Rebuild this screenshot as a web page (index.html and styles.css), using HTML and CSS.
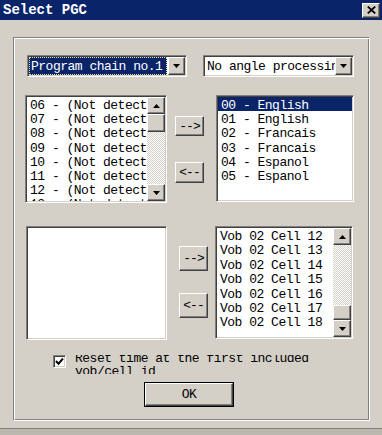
FILE: index.html
```html
<!DOCTYPE html>
<html>
<head>
<meta charset="utf-8">
<link rel="stylesheet" href="styles.css">
</head>
<body>
<div class="window">
  <div class="titlebar">
    <span class="title">Select PGC</span>
    <div class="close"><svg width="9" height="8" viewBox="0 0 9 8"><path d="M0.8 0.6 L8.2 7.4 M8.2 0.6 L0.8 7.4" stroke="#000" stroke-width="1.8" fill="none"/></svg></div>
  </div>
  <div class="group">
    <div class="row row-combos">
      <div class="combo combo1">
        <div class="combo-field"><span class="sel-text">Program chain no.1</span></div>
        <div class="raised drop-btn"><svg width="7" height="4" viewBox="0 0 7 4"><polygon points="0,0 7,0 3.5,4" fill="#000"/></svg></div>
      </div>
      <div class="combo combo2">
        <div class="combo-field plain">No angle processing</div>
        <div class="raised drop-btn"><svg width="7" height="4" viewBox="0 0 7 4"><polygon points="0,0 7,0 3.5,4" fill="#000"/></svg></div>
      </div>
    </div>

    <div class="row row-lists1">
      <div class="listbox list1">
        <div class="items">
          <div class="item">06 - (Not detected)</div>
          <div class="item">07 - (Not detected)</div>
          <div class="item">08 - (Not detected)</div>
          <div class="item">09 - (Not detected)</div>
          <div class="item">10 - (Not detected)</div>
          <div class="item">11 - (Not detected)</div>
          <div class="item">12 - (Not detected)</div>
          <div class="item">13 - (Not detected)</div>
        </div>
        <div class="vscroll">
          <div class="raised sb-btn"><svg width="7" height="4" viewBox="0 0 7 4"><polygon points="0,4 7,4 3.5,0" fill="#000"/></svg></div>
          <div class="raised thumb thumb-top"></div>
          <div class="track"></div>
          <div class="raised sb-btn"><svg width="7" height="4" viewBox="0 0 7 4"><polygon points="0,0 7,0 3.5,4" fill="#000"/></svg></div>
        </div>
      </div>
      <div class="btncol btncol1">
        <div class="raised pbtn pbtn-a">--&gt;</div>
        <div class="raised pbtn pbtn-b">&lt;--</div>
      </div>
      <div class="listbox list2">
        <div class="items">
          <div class="item selected">00 - English</div>
          <div class="item">01 - English</div>
          <div class="item">02 - Francais</div>
          <div class="item">03 - Francais</div>
          <div class="item">04 - Espanol</div>
          <div class="item">05 - Espanol</div>
        </div>
      </div>
    </div>

    <div class="row row-lists2">
      <div class="listbox list3"></div>
      <div class="btncol btncol2">
        <div class="raised pbtn pbtn-c">--&gt;</div>
        <div class="raised pbtn pbtn-d">&lt;--</div>
      </div>
      <div class="listbox list4">
        <div class="items">
          <div class="item">Vob 02 Cell 12</div>
          <div class="item">Vob 02 Cell 13</div>
          <div class="item">Vob 02 Cell 14</div>
          <div class="item">Vob 02 Cell 15</div>
          <div class="item">Vob 02 Cell 16</div>
          <div class="item">Vob 02 Cell 17</div>
          <div class="item">Vob 02 Cell 18</div>
        </div>
        <div class="vscroll">
          <div class="raised sb-btn"><svg width="7" height="4" viewBox="0 0 7 4"><polygon points="0,4 7,4 3.5,0" fill="#000"/></svg></div>
          <div class="track"></div>
          <div class="raised thumb thumb-bottom"></div>
          <div class="raised sb-btn"><svg width="7" height="4" viewBox="0 0 7 4"><polygon points="0,0 7,0 3.5,4" fill="#000"/></svg></div>
        </div>
      </div>
    </div>

    <div class="row checkrow">
      <div class="checkbox"><svg width="9" height="9" viewBox="0 0 9 9"><path d="M1 4 L3.5 6.8 L8 1.5" stroke="#000" stroke-width="2" fill="none"/></svg></div>
      <div class="check-label"><div class="check-text">Reset time at the first included<br>vob/cell id</div></div>
    </div>

    <div class="row okrow">
      <div class="okbtn"><div class="raised okinner">OK</div></div>
    </div>
  </div>
  <div class="frame-bottom"></div>
</div>
</body>
</html>
```
FILE: styles.css
```css
html, body {
  margin: 0;
  padding: 0;
}
body {
  background: #d4d0c8;
  font-family: "Liberation Mono", "DejaVu Sans Mono", monospace;
  font-size: 13px;
  letter-spacing: -0.5px;
  color: #000;
  width: 382px;
  height: 435px;
  overflow: hidden;
}
.window {
  width: 382px;
}
.titlebar {
  height: 20px;
  background: #0a246a;
  display: flex;
  align-items: center;
  justify-content: space-between;
  padding: 0 2px 0 3px;
  box-sizing: border-box;
}
.title {
  color: #fff;
  font-weight: bold;
  font-size: 14px;
  letter-spacing: 0;
  line-height: 20px;
}
.raised {
  box-sizing: border-box;
  background: #d4d0c8;
  border: 1px solid;
  border-color: #fff #404040 #404040 #fff;
  box-shadow: inset -1px -1px #808080;
}
.close {
  width: 18px;
  height: 15px;
  box-sizing: border-box;
  background: #d4d0c8;
  border: 1px solid;
  border-color: #fff #404040 #404040 #fff;
  box-shadow: inset -1px -1px #808080;
  display: flex;
  align-items: center;
  justify-content: center;
}
.group {
  box-sizing: border-box;
  margin: 17px 12px 0 13px;
  width: 357px;
  height: 384px;
  border: 1px solid;
  border-color: #808080 #fff #fff #808080;
  box-shadow: inset 1px 1px #fff, inset -1px -1px #808080;
}
.row {
  display: flex;
  align-items: flex-start;
}
.row-combos {
  margin-top: 17px;
  padding-left: 13px;
}
.combo {
  box-sizing: border-box;
  height: 22px;
  display: flex;
  align-items: stretch;
  background: #fff;
  border: 1px solid;
  border-color: #808080 #fff #fff #808080;
  box-shadow: inset 1px 1px #404040, inset -1px -1px #d4d0c8;
  padding: 1px;
}
.combo1 {
  width: 160px;
}
.combo2 {
  width: 151px;
  margin-left: 16px;
}
.combo-field {
  flex: 1;
  min-width: 0;
  overflow: hidden;
  white-space: nowrap;
  padding-right: 1px;
  display: flex;
}
.sel-text {
  flex: 1;
  background: #0a246a;
  color: #fff;
  border: 1px dotted #e8e4a0;
  padding-left: 1px;
  line-height: 17px;
}
.plain {
  padding-left: 2px;
  line-height: 19px;
  padding-right: 2px;
}
.drop-btn {
  width: 17px;
  flex: none;
  display: flex;
  align-items: center;
  justify-content: center;
}
.listbox {
  box-sizing: border-box;
  background: #fff;
  border: 1px solid;
  border-color: #808080 #fff #fff #808080;
  box-shadow: inset 1px 1px #404040, inset -1px -1px #d4d0c8;
  padding: 1px;
  display: flex;
  overflow: hidden;
}
.items {
  flex: 1;
  min-width: 0;
  overflow: hidden;
}
.item {
  white-space: nowrap;
  overflow-x: clip;
  overflow-y: visible;
  line-height: 18px;
  height: 14.2px;
  padding-left: 3px;
}
.item.selected {
  background: #0a246a;
  color: #fff;
}
.vscroll {
  width: 18px;
  flex: none;
  display: flex;
  flex-direction: column;
}
.sb-btn {
  height: 17px;
  flex: none;
  display: flex;
  align-items: center;
  justify-content: center;
}
.thumb {
  height: 18px;
  flex: none;
}
.thumb-bottom {
  height: 15px;
}
.track {
  flex: 1;
  background-color: #fff;
  background-image: repeating-conic-gradient(#d4d0c8 0 25%, #fff 0 50%);
  background-size: 2px 2px;
}
.row-lists1 {
  margin-top: 18px;
  padding-left: 11px;
}
.list1 {
  width: 142px;
  height: 108px;
}
.list2 {
  width: 138px;
  height: 107px;
  margin-left: 12px;
}
.btncol {
  width: 29px;
  display: flex;
  flex-direction: column;
}
.btncol1 {
  margin-left: 8px;
}
.pbtn {
  width: 29px;
  display: flex;
  align-items: center;
  justify-content: center;
  letter-spacing: -1px;
}
.pbtn-a {
  margin-top: 21px;
  height: 20px;
}
.pbtn-b {
  margin-top: 26px;
  height: 21px;
}
.row-lists2 {
  margin-top: 23px;
  padding-left: 12px;
}
.list3 {
  width: 141px;
  height: 114px;
}
.btncol2 {
  margin-left: 12px;
}
.pbtn-c {
  margin-top: 20px;
  height: 25px;
}
.pbtn-d {
  margin-top: 22px;
  height: 25px;
}
.list4 {
  width: 138px;
  height: 113px;
  margin-left: 7px;
}
.list4 .item {
  height: 14.4px;
}
.checkrow {
  margin-top: 14px;
  padding-left: 39px;
  height: 20px;
}
.checkbox {
  box-sizing: border-box;
  width: 13px;
  height: 13px;
  margin-top: 1px;
  background: #fff;
  border: 1px solid;
  border-color: #808080 #fff #fff #808080;
  box-shadow: inset 1px 1px #404040, inset -1px -1px #d4d0c8;
  display: flex;
  align-items: center;
  justify-content: center;
}
.check-label {
  margin-left: 9px;
  margin-top: 1px;
  height: 19px;
  overflow: hidden;
}
.check-text {
  margin-top: -3px;
  line-height: 13px;
  white-space: nowrap;
}
.okrow {
  margin-top: 8px;
  padding-left: 130px;
}
.okbtn {
  box-sizing: border-box;
  width: 90px;
  height: 25px;
  border: 1px solid #000;
  display: flex;
}
.okinner {
  flex: 1;
  display: flex;
  align-items: center;
  justify-content: center;
}
.frame-bottom {
  margin-top: 7px;
  height: 7px;
  border-top: 1px solid #808080;
  background: #bcb8b0;
}
```
